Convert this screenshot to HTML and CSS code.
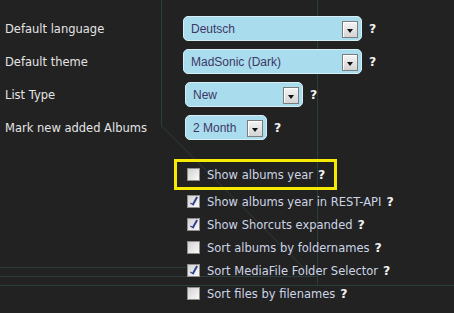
FILE: index.html
```html
<!DOCTYPE html>
<html lang="en">
<head>
  <meta charset="UTF-8">
  <title>Settings</title>
  <link rel="stylesheet" href="styles.css">
</head>
<body>
  <svg class="bg-lines" width="454" height="313">
    <path d="M161.5 0 V126 L312 276.5" />
    <path d="M317.5 0 V285.5" />
    <path d="M0 267.5 H186" />
    <path d="M0 276.5 H317" />
    <path d="M0 285.5 H454" />
  </svg>

  <div class="settings">
    <div class="row">
      <span class="label">Default language</span>
      <span class="select lang">Deutsch<span class="arrow"></span></span>
      <span class="help">?</span>
    </div>
    <div class="row">
      <span class="label">Default theme</span>
      <span class="select lang">MadSonic (Dark)<span class="arrow"></span></span>
      <span class="help">?</span>
    </div>
    <div class="row">
      <span class="label">List Type</span>
      <span class="select list">New<span class="arrow"></span></span>
      <span class="help">?</span>
    </div>
    <div class="row">
      <span class="label">Mark new added Albums</span>
      <span class="select month">2 Month<span class="arrow"></span></span>
      <span class="help">?</span>
    </div>

    <div class="checks">
      <div class="check marked">
        <span class="box"></span>Show albums year<span class="help">?</span>
      </div>
      <div class="check">
        <span class="box on"></span>Show albums year in REST-API<span class="help">?</span>
      </div>
      <div class="check">
        <span class="box on"></span>Show Shorcuts expanded<span class="help">?</span>
      </div>
      <div class="check">
        <span class="box"></span>Sort albums by foldernames<span class="help">?</span>
      </div>
      <div class="check">
        <span class="box on"></span>Sort MediaFile Folder Selector<span class="help">?</span>
      </div>
      <div class="check">
        <span class="box"></span>Sort files by filenames<span class="help">?</span>
      </div>
    </div>
  </div>
</body>
</html>
```

FILE: styles.css
```css
html, body {
  margin: 0;
  height: 100%;
  overflow: hidden;
}
body {
  background-color: #222222;
  color: #e4e4e4;
  font-family: "DejaVu Sans", Verdana, sans-serif;
  font-size: 11.5px;
  position: relative;
}
.bg-lines {
  position: absolute;
  left: 0;
  top: 0;
}
.bg-lines path {
  fill: none;
  stroke: #2c3e3c;
  stroke-width: 1;
}
.settings {
  position: relative;
  padding: 16px 0 0 5px;
}
.row {
  display: flex;
  align-items: center;
  height: 25px;
  margin-bottom: 8px;
}
.label {
  width: 178px;
}
.select {
  display: flex;
  align-items: center;
  justify-content: space-between;
  box-sizing: border-box;
  height: 25px;
  padding: 1px 3px 0 7px;
  background-color: #a9dced;
  border: 1px solid #d6eef6;
  border-radius: 5px;
  color: #3e3766;
  font-family: "Liberation Sans", Arial, sans-serif;
  font-size: 12px;
}
.select.lang {
  width: 179px;
}
.select.list {
  width: 118px;
  margin-left: 2px;
}
.select.month {
  width: 82px;
  margin-left: 2px;
}
.arrow {
  position: relative;
  box-sizing: border-box;
  width: 16px;
  height: 17px;
  border: 1px solid #7c7c7c;
  background: linear-gradient(#f4f4f4, #d4d4d4);
  box-shadow: inset 1px 1px 0 #ffffff;
}
.arrow::after {
  content: "";
  position: absolute;
  left: 4px;
  top: 7px;
  border-left: 3px solid transparent;
  border-right: 3px solid transparent;
  border-top: 4px solid #111111;
}
.help {
  margin-left: 7px;
  color: #f2f2f2;
  font-weight: bold;
  font-size: 12.5px;
}
.checks {
  margin: 19px 0 0 169px;
  color: #cdd5e6;
}
.check {
  display: flex;
  align-items: center;
  height: 23px;
  padding-left: 13px;
}
.check .help {
  margin-left: 5px;
}
.check.marked {
  width: fit-content;
  height: 25px;
  padding: 0 9px 0 10px;
  border: 3px solid #f6ea00;
}
.box {
  position: relative;
  box-sizing: border-box;
  width: 13px;
  height: 13px;
  margin-right: 7px;
  border: 1px solid #8e8e8e;
  background: linear-gradient(135deg, #d2d2d2, #fafafa);
}
.box.on::after {
  content: "";
  position: absolute;
  left: 4px;
  top: 0px;
  width: 2px;
  height: 8px;
  border-right: 2px solid #2f3f8e;
  border-bottom: 1px solid #2f3f8e;
  transform: rotate(30deg);
}
```
